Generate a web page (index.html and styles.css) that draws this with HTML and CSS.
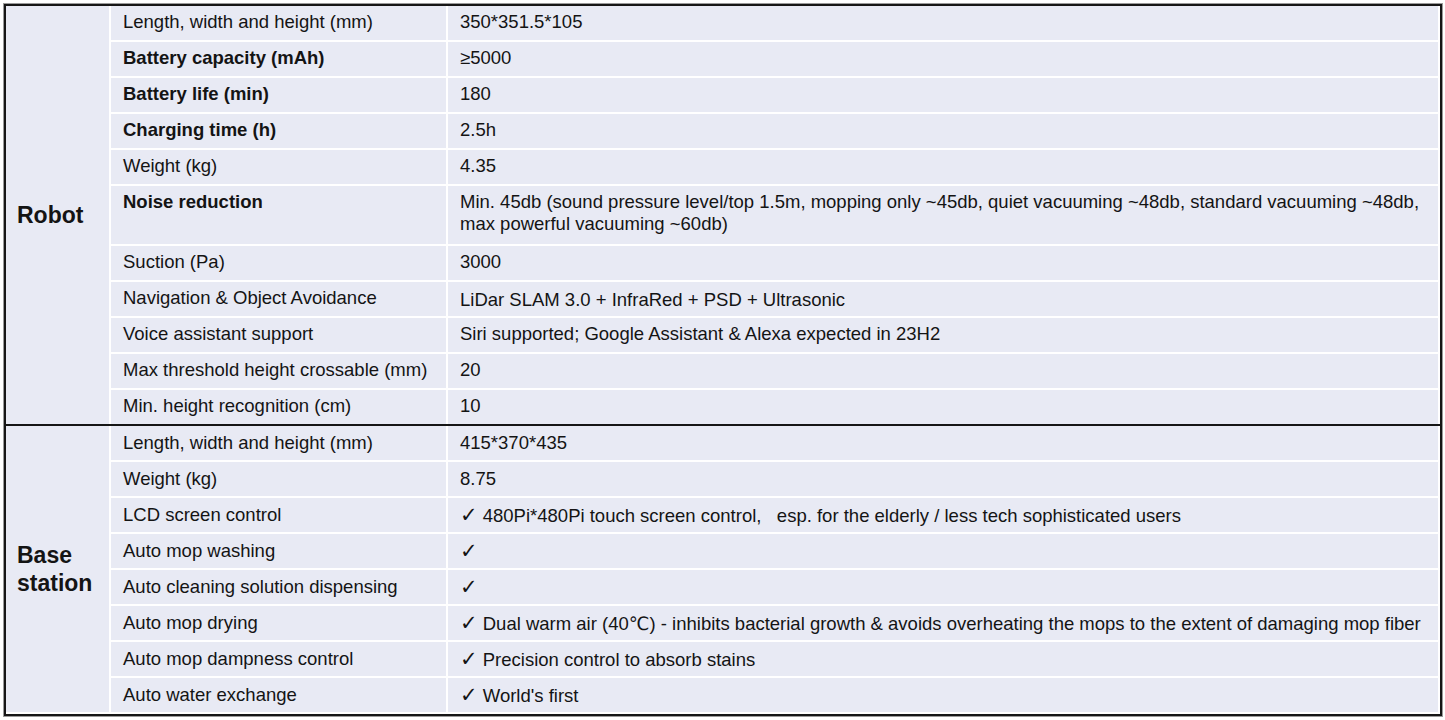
FILE: index.html
```html
<!DOCTYPE html>
<html lang="en">
<head>
<meta charset="utf-8">
<title>Specifications</title>
<link rel="stylesheet" href="styles.css">
</head>
<body>
<div class="sheet">
  <section class="group group-robot">
    <div class="cat">Robot</div>
    <div class="label">Length, width and height (mm)</div><div class="value">350*351.5*105</div>
    <div class="label bold">Battery capacity (mAh)</div><div class="value">≥5000</div>
    <div class="label bold">Battery life (min)</div><div class="value">180</div>
    <div class="label bold">Charging time (h)</div><div class="value">2.5h</div>
    <div class="label">Weight (kg)</div><div class="value">4.35</div>
    <div class="label bold tall">Noise reduction</div><div class="value tall">Min. 45db (sound pressure level/top 1.5m, mopping only ~45db, quiet vacuuming ~48db, standard vacuuming ~48db,<br>max powerful vacuuming ~60db)</div>
    <div class="label">Suction (Pa)</div><div class="value">3000</div>
    <div class="label">Navigation &amp; Object Avoidance</div><div class="value shift">LiDar SLAM 3.0 + InfraRed + PSD + Ultrasonic</div>
    <div class="label">Voice assistant support</div><div class="value">Siri supported; Google Assistant &amp; Alexa expected in 23H2</div>
    <div class="label">Max threshold height crossable (mm)</div><div class="value">20</div>
    <div class="label">Min. height recognition (cm)</div><div class="value">10</div>
  </section>
  <section class="group group-base">
    <div class="cat">Base<br>station</div>
    <div class="label">Length, width and height (mm)</div><div class="value">415*370*435</div>
    <div class="label">Weight (kg)</div><div class="value">8.75</div>
    <div class="label">LCD screen control</div><div class="value"><span class="chk">✓</span> 480Pi*480Pi touch screen control,&nbsp;&nbsp; esp. for the elderly / less tech sophisticated users</div>
    <div class="label">Auto mop washing</div><div class="value"><span class="chk">✓</span></div>
    <div class="label">Auto cleaning solution dispensing</div><div class="value"><span class="chk">✓</span></div>
    <div class="label">Auto mop drying</div><div class="value"><span class="chk">✓</span> Dual warm air (40℃) - inhibits bacterial growth &amp; avoids overheating the mops to the extent of damaging mop fiber</div>
    <div class="label">Auto mop dampness control</div><div class="value"><span class="chk">✓</span> Precision control to absorb stains</div>
    <div class="label">Auto water exchange</div><div class="value"><span class="chk">✓</span> World's first</div>
  </section>
</div>
</body>
</html>
```

FILE: styles.css
```css
html, body {
  margin: 0;
  padding: 0;
  background: #ffffff;
}

body {
  font-family: "Liberation Sans", Arial, "DejaVu Sans", sans-serif;
  color: #141414;
  padding: 4px;
}

.sheet {
  width: 1434px;
  border: 2px solid #161616;
  box-shadow: 0 0 0 1px #9a9a9a;
  background: #ffffff;
  padding-bottom: 2px;
}

.group {
  display: grid;
  grid-template-columns: 103px 335px 1fr;
  column-gap: 2px;
  row-gap: 2px;
  background: #ffffff;
  padding-right: 2px;
}

.group-robot {
  grid-template-rows: repeat(5, 34px) 58px repeat(5, 34px);
  border-bottom: 2px solid #161616;
}

.group-base {
  grid-template-rows: repeat(8, 34px);
}

.cat {
  grid-column: 1;
  grid-row: 1 / -1;
  background: #e8eaf4;
  display: flex;
  align-items: center;
  padding-left: 11px;
  font-size: 23px;
  font-weight: bold;
  line-height: 28px;
}

.label, .value {
  background: #e8eaf4;
  font-size: 18.5px;
  line-height: 22px;
  padding: 5px 12px 0 12px;
  white-space: nowrap;
}

.group-base .label,
.group-base .value {
  padding-top: 6px;
}

.label {
  grid-column: 2;
}

.value {
  grid-column: 3;
}

.value.shift {
  padding-top: 7px;
}

.bold {
  font-weight: bold;
}

.chk {
  font-family: "DejaVu Sans", sans-serif;
  font-size: 21px;
  line-height: 22px;
}
```
